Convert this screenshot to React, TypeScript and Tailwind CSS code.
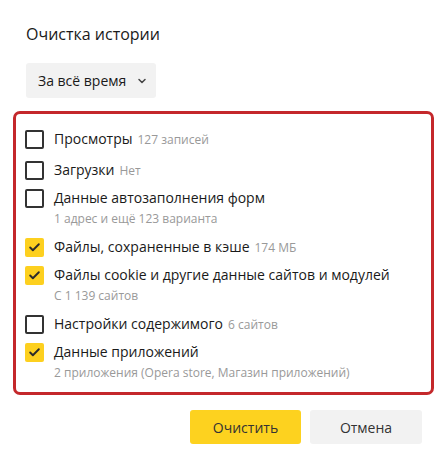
import { Check, ChevronDown } from "lucide-react";

type Item = { label: string; note?: string; sub?: string; checked: boolean };

const items: Item[] = [
  { label: "Просмотры", note: "127 записей", checked: false },
  { label: "Загрузки", note: "Нет", checked: false },
  { label: "Данные автозаполнения форм", sub: "1 адрес и ещё 123 варианта", checked: false },
  { label: "Файлы, сохраненные в кэше", note: "174 МБ", checked: true },
  { label: "Файлы cookie и другие данные сайтов и модулей", sub: "С 1 139 сайтов", checked: true },
  { label: "Настройки содержимого", note: "6 сайтов", checked: false },
  { label: "Данные приложений", sub: "2 приложения (Opera store, Магазин приложений)", checked: true },
];

const Box = ({ checked }: { checked: boolean }) =>
  checked ? (
    <div className="w-[19px] h-[19px] rounded-[2px] bg-[#fdd01f] flex items-center justify-center shrink-0">
      <Check size={13} strokeWidth={3.5} className="text-[#2b2b2b]" />
    </div>
  ) : (
    <div className="w-[19px] h-[19px] rounded-[2px] border-2 border-[#333] shrink-0" />
  );

export default function App() {
  return (
    <div
      className="w-[447px] h-[473px] bg-white text-[#1a1a1a] overflow-hidden"
      style={{ fontFamily: '"Open Sans", "Noto Sans", sans-serif' }}
    >
      <h1 className="pl-[26px] pt-[23px] text-[16px] leading-[22px]">Очистка истории</h1>

      <div className="ml-[26px] mt-[18px] w-[130px] h-[35px] bg-[#f2f2f2] rounded-[3px] flex items-center pl-[12px] gap-[10px] text-[14px]">
        <span>За всё время</span>
        <ChevronDown size={12} strokeWidth={3} className="text-[#444]" />
      </div>

      <div className="mx-[13px] mt-[13px] h-[284px] border-[3px] border-[#c4282b] rounded-[7px] pl-[9px] pt-[15px]">
        <div className="flex flex-col gap-[8px]">
          {items.map((it, i) => (
            <div key={i} className={i === 0 ? "mb-[3px]" : ""}>
              <div className="flex items-center gap-[10px] h-[20px]">
                <Box checked={it.checked} />
                <div className="text-[14px] leading-[20px] whitespace-nowrap">
                  {it.label}
                  {it.note && <span className="text-[12px] text-[#999] ml-[5px]">{it.note}</span>}
                </div>
              </div>
              {it.sub && (
                <div className="pl-[29px] mt-[1px] text-[12px] leading-[20px] text-[#999]">{it.sub}</div>
              )}
            </div>
          ))}
        </div>
      </div>

      <div className="flex justify-end gap-[9px] pr-[25px] mt-[15px]">
        <button className="w-[111px] h-[34px] rounded-[3px] bg-[#fdd21f] text-[14px] text-[#333]">Очистить</button>
        <button className="w-[112px] h-[34px] rounded-[3px] bg-[#f2f2f2] text-[14px] text-[#333]">Отмена</button>
      </div>
    </div>
  );
}
